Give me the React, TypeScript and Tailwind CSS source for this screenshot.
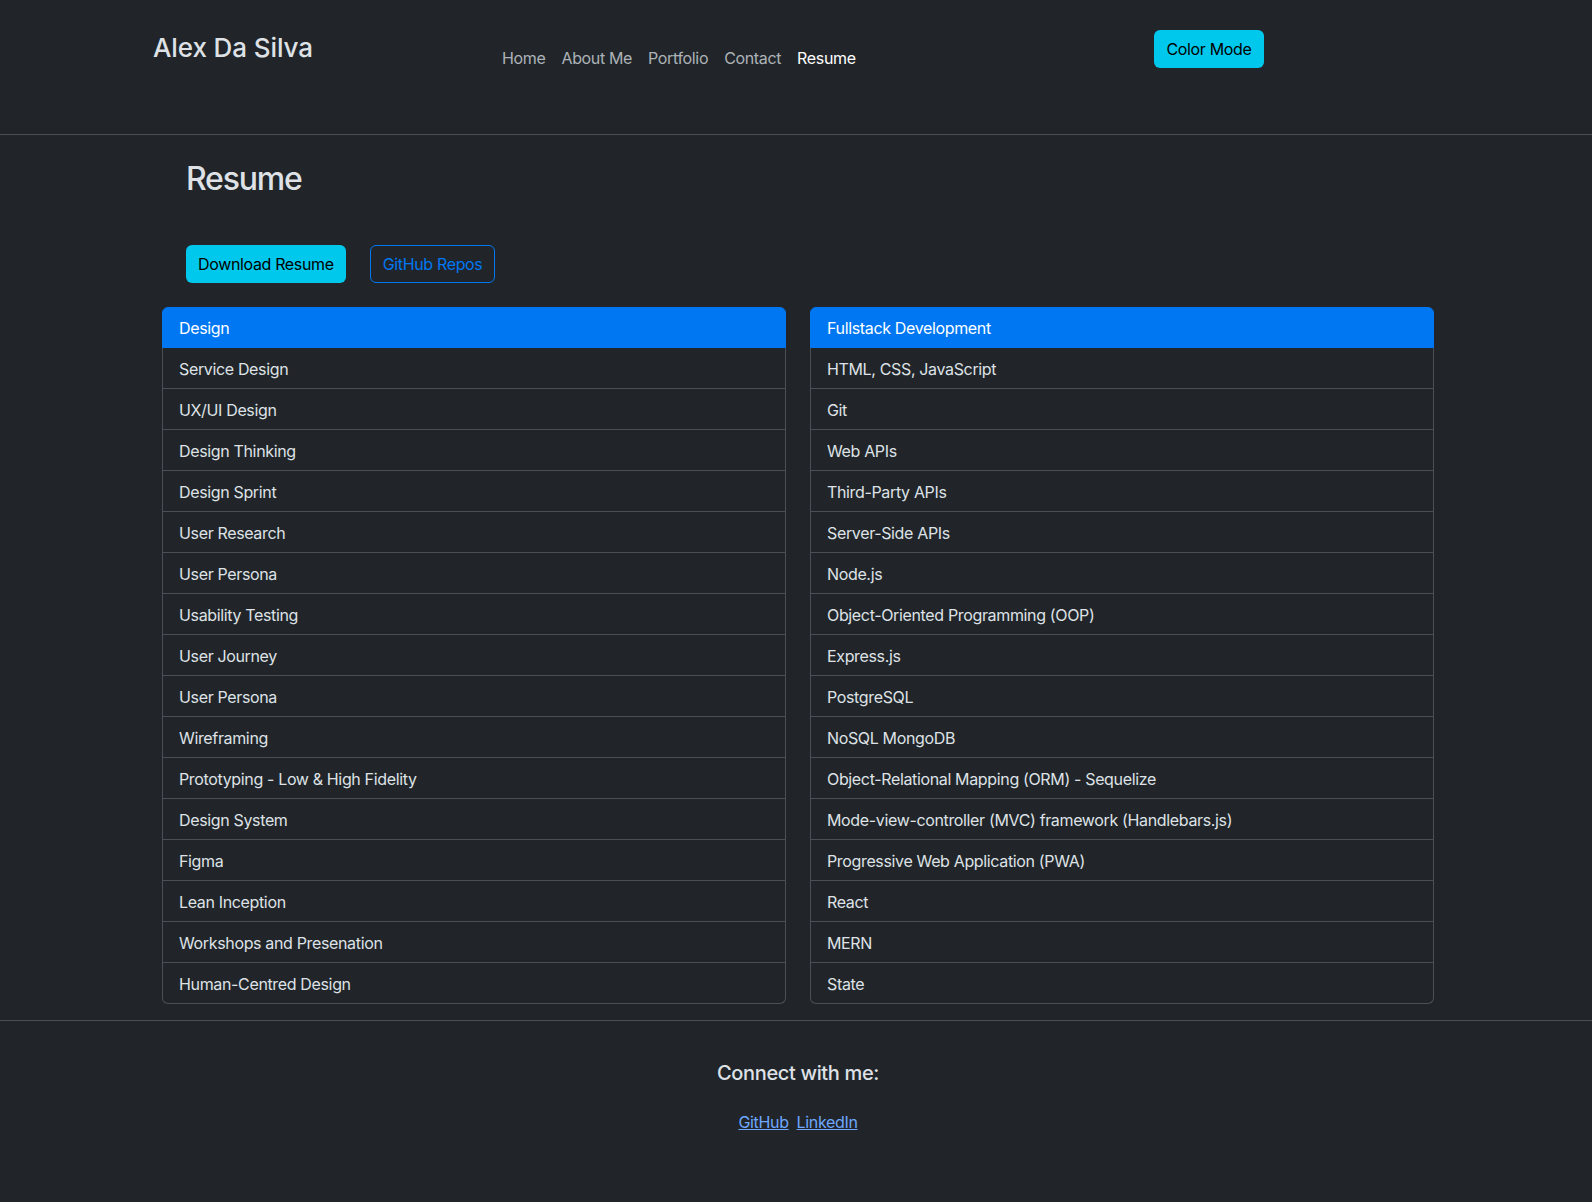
import React from "react";

const design = [
  "Service Design",
  "UX/UI Design",
  "Design Thinking",
  "Design Sprint",
  "User Research",
  "User Persona",
  "Usability Testing",
  "User Journey",
  "User Persona",
  "Wireframing",
  "Prototyping - Low & High Fidelity",
  "Design System",
  "Figma",
  "Lean Inception",
  "Workshops and Presenation",
  "Human-Centred Design",
];

const dev = [
  "HTML, CSS, JavaScript",
  "Git",
  "Web APIs",
  "Third-Party APIs",
  "Server-Side APIs",
  "Node.js",
  "Object-Oriented Programming (OOP)",
  "Express.js",
  "PostgreSQL",
  "NoSQL MongoDB",
  "Object-Relational Mapping (ORM) - Sequelize",
  "Mode-view-controller (MVC) framework (Handlebars.js)",
  "Progressive Web Application (PWA)",
  "React",
  "MERN",
  "State",
];

function SkillList({ title, items }: { title: string; items: string[] }) {
  return (
    <div className="flex flex-col w-[624px]">
      <div className="h-[41px] px-4 pt-px flex items-center bg-[#0077f2] border border-[#0077f2] rounded-t-md text-white">
        {title}
      </div>
      {items.map((it, i) => (
        <div
          key={i}
          className={
            "h-[41px] px-4 pt-[2px] flex items-center border-x border-b border-[#495057] text-[#dee2e6] " +
            (i === items.length - 1 ? "rounded-b-md" : "")
          }
        >
          {it}
        </div>
      ))}
    </div>
  );
}

export default function App() {
  return (
    <div
      className="min-h-[1202px] bg-[#212529] text-[#dee2e6] text-[16px] leading-6 tracking-[-0.35px]"
      style={{ fontFamily: "Inter, 'Noto Sans', sans-serif" }}
    >
      <header className="h-[135px] border-b border-[#495057] flex items-start pl-[153px]">
        <div className="w-[341px] pt-[32px] text-[26px] leading-[31px] font-medium tracking-[-0.1px] text-[#dee2e6]">
          Alex Da Silva
        </div>
        <nav className="w-[660px] pt-[38px] flex">
          {["Home", "About Me", "Portfolio", "Contact"].map((n) => (
            <a key={n} className="px-2 py-2 text-[rgba(222,226,230,0.75)]">
              {n}
            </a>
          ))}
          <a className="px-2 py-2 text-white">Resume</a>
        </nav>
        <div className="pt-[30px]">
          <button className="h-[38px] w-[110px] rounded-md bg-[#00c8ed] text-black">
            Color Mode
          </button>
        </div>
      </header>

      <main className="flex flex-col pl-[162px] pt-[25px]">
        <h2 className="pl-[24px] text-[32px] leading-[38px] font-medium tracking-[-1.2px] text-[#dee2e6]">
          Resume
        </h2>
        <div className="pl-[24px] mt-[47px] flex gap-[24px]">
          <button className="h-[38px] px-3 rounded-md bg-[#00c8ed] text-black">
            Download Resume
          </button>
          <button className="h-[38px] px-3 rounded-md border border-[#0077f2] text-[#0077f2]">
            GitHub Repos
          </button>
        </div>
        <div className="mt-[24px] flex gap-[24px]">
          <SkillList title="Design" items={design} />
          <SkillList title="Fullstack Development" items={dev} />
        </div>
      </main>

      <footer className="mt-[16px] border-t border-[#495057] flex flex-col items-center pt-[40px] pl-[4px]">
        <h5 className="text-[20px] leading-[24px] font-medium text-[#dee2e6]">
          Connect with me:
        </h5>
        <div className="mt-[25px] flex gap-[8px]">
          <a className="underline text-[#6ea8fe]">GitHub</a>
          <a className="underline text-[#6ea8fe]">LinkedIn</a>
        </div>
      </footer>
    </div>
  );
}
